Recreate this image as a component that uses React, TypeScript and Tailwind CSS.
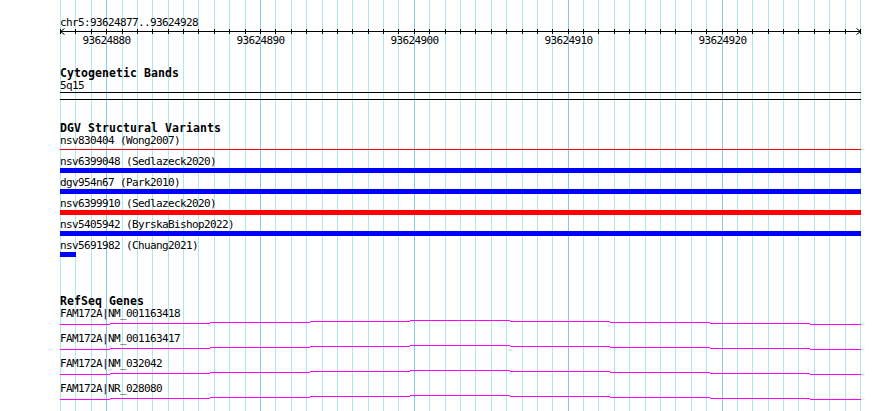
import React from "react";

const STEP = 800 / 52;
const GRID = Array.from({ length: 53 }, (_, i) => Math.floor(60.5 + i * STEP));
const MAJOR = new Set([3, 13, 23, 33, 43]);
const LABELS = [
  { i: 3, t: "93624880" },
  { i: 13, t: "93624890" },
  { i: 23, t: "93624900" },
  { i: 33, t: "93624910" },
  { i: 43, t: "93624920" },
];

const GENE_SEGS: [number, number, number][] = [
  [60, 110, 5],
  [110, 210, 4],
  [210, 310, 3],
  [310, 410, 2],
  [410, 510, 1],
  [510, 610, 2],
  [610, 710, 3],
  [710, 810, 4],
  [810, 861, 5],
];

const DGV = [
  { label: "nsv6399048 (Sedlazeck2020)", color: "bg-[#0000ff]", full: true },
  { label: "dgv954n67 (Park2010)", color: "bg-[#0000ff]", full: true },
  { label: "nsv6399910 (Sedlazeck2020)", color: "bg-[#ff0000]", full: true },
  { label: "nsv5405942 (ByrskaBishop2022)", color: "bg-[#0000ff]", full: true },
  { label: "nsv5691982 (Chuang2021)", color: "bg-[#0000ff]", full: false },
];

const GENES = [
  "FAM172A|NM_001163418",
  "FAM172A|NM_001163417",
  "FAM172A|NM_032042",
  "FAM172A|NR_028080",
];

const txt =
  "font-['DejaVu_Sans_Mono',monospace] text-[11px] tracking-[-0.62px] leading-[11px] h-[11px] whitespace-pre text-black";
const title =
  "font-['DejaVu_Sans_Mono',monospace] text-[11.5px] font-bold tracking-[0.08px] leading-[12px] h-[12px] whitespace-pre text-black";

function Grid() {
  return (
    <svg className="absolute left-0 top-0" width={890} height={411}>
      {GRID.map((x, i) => (
        <rect
          key={i}
          x={x}
          y={0}
          width={1}
          height={411}
          fill={MAJOR.has(i) ? "#84c8ec" : "#ace9ef"}
        />
      ))}
    </svg>
  );
}

function Ruler() {
  return (
    <div className="relative h-[18px] w-[801px]">
      <svg className="absolute left-[-60px] top-0" width={890} height={18}>
        <rect x={60} y={3} width={801} height={1} fill="#000" />
        {GRID.map((x, i) => (
          <rect key={i} x={x} y={1} width={1} height={5} fill="#000" />
        ))}
        <path
          d="M64.5 0.5 L60.5 3.5 L64.5 6.5 M856.5 0.5 L860.5 3.5 L856.5 6.5"
          stroke="#000"
          strokeWidth={1}
          fill="none"
        />
      </svg>
      {LABELS.map((l) => (
        <span
          key={l.t}
          className={`${txt} absolute top-[7px] -translate-x-1/2`}
          style={{ left: GRID[l.i] - 60 + 0.5 }}
        >
          {l.t}
        </span>
      ))}
    </div>
  );
}

function GeneLine() {
  return (
    <svg className="block -ml-[60px]" width={890} height={14}>
      {GENE_SEGS.map(([a, b, y], i) => (
        <rect key={i} x={a} y={y} width={b - a} height={1} fill="#ff00ff" />
      ))}
    </svg>
  );
}

export default function App() {
  return (
    <div className="relative w-[890px] h-[411px] bg-white overflow-hidden">
      <Grid />
      <div className="relative flex flex-col pl-[60px] pt-[17px]">
        <div className={txt}>chr5:93624877..93624928</div>
        <Ruler />

        <div className={`${title} mt-[21px]`}>Cytogenetic Bands</div>
        <div className={`${txt} mt-[1px]`}>5q15</div>
        <div className="mt-[1px] h-px w-[801px] bg-black" />
        <div className="mt-[6px] h-px w-[801px] bg-black" />

        <div className={`${title} mt-[22px]`}>DGV Structural Variants</div>
        <div className={`${txt} mt-[1px]`}>nsv830404 (Wong2007)</div>
        <div className="mt-[3px] h-px w-[801px] bg-[#ff0000]" />
        <div className="mt-[6px] flex flex-col gap-[4px]">
          {DGV.map((d) => (
            <div key={d.label} className="flex flex-col">
              <div className={txt}>{d.label}</div>
              <div
                className={`mt-[1px] h-[5px] ${d.color} ${
                  d.full ? "w-[801px]" : "w-[16px]"
                }`}
              />
            </div>
          ))}
        </div>

        <div className={`${title} mt-[38px]`}>RefSeq Genes</div>
        <div className="mt-[1px] flex flex-col">
          {GENES.map((g) => (
            <div key={g} className="flex flex-col">
              <div className={txt}>{g}</div>
              <GeneLine />
            </div>
          ))}
        </div>
      </div>
    </div>
  );
}
